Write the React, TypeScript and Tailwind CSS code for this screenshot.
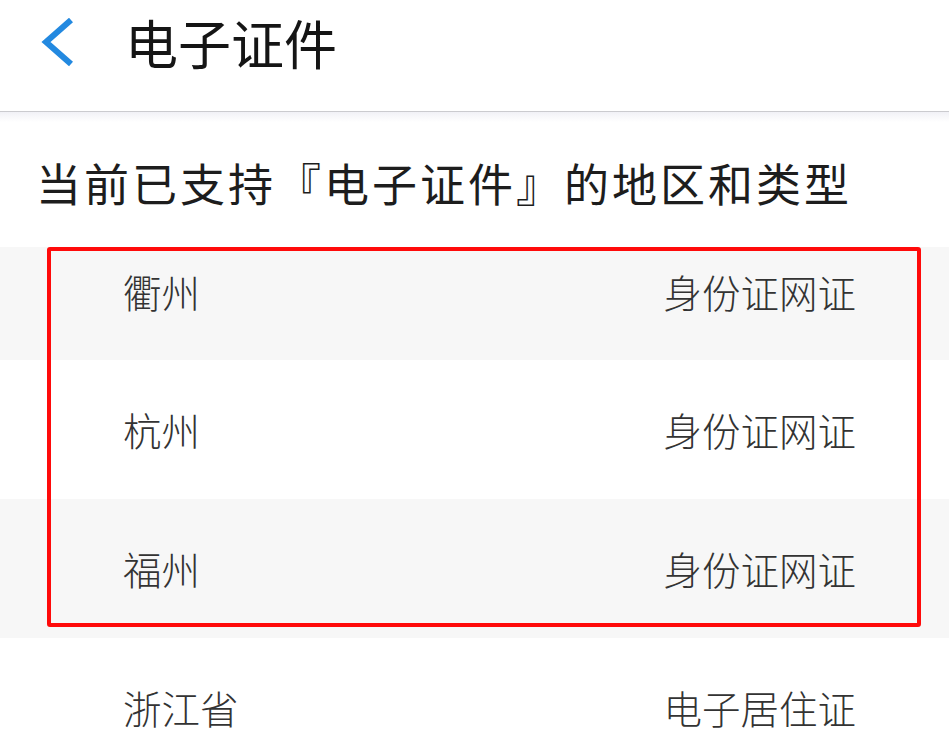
import React from "react";

const rows = [
  { city: "衢州", type: "身份证网证", gray: true, first: true },
  { city: "杭州", type: "身份证网证", gray: false },
  { city: "福州", type: "身份证网证", gray: true },
  { city: "浙江省", type: "电子居住证", gray: false },
];

export default function App() {
  return (
    <div
      className="relative w-[949px] h-[751px] overflow-hidden bg-white"
      style={{ fontFamily: '"Noto Sans CJK SC", "Noto Sans", sans-serif' }}
    >
      {/* header */}
      <header className="h-[112px] flex items-center border-b-[1px] border-[#cbcbcf] pb-[26px]">
        <svg className="ml-[40px] w-[36px] h-[50px]" viewBox="0 0 36 50" fill="none">
          <path d="M31 2 L6 24 L31 46" stroke="#2389e0" strokeWidth={6} strokeLinejoin="miter" />
        </svg>
        <h1 className="ml-[49px] text-[53px] leading-none text-[#151515]">电子证件</h1>
      </header>
      <div className="h-[10px] bg-gradient-to-b from-[#f1f1f6] to-white" />

      {/* section title */}
      <div className="h-[125px] flex items-center pl-[36px] pb-[4px]">
        <h2 className="text-[45px] leading-none text-[#1d1d1d] tracking-[3px]">
          当前已支持『电子证件』的地区和类型
        </h2>
      </div>

      {/* list */}
      <div>
        {rows.map((r) => (
          <div
            key={r.city}
            className={`flex items-center justify-between pl-[123px] pr-[93px] text-[38.5px] leading-none font-light text-[#333333] ${
              r.gray ? "bg-[#f7f7f7]" : "bg-white"
            } ${r.first ? "h-[113px] pb-[24px]" : "h-[139px]"}`}
          >
            <span>{r.city}</span>
            <span>{r.type}</span>
          </div>
        ))}
      </div>

      {/* red annotation box */}
      <div className="absolute left-[47px] top-[247px] w-[874px] h-[380px] border-[4px] border-[#ff0a0a] rounded-[3px] pointer-events-none" />
    </div>
  );
}
